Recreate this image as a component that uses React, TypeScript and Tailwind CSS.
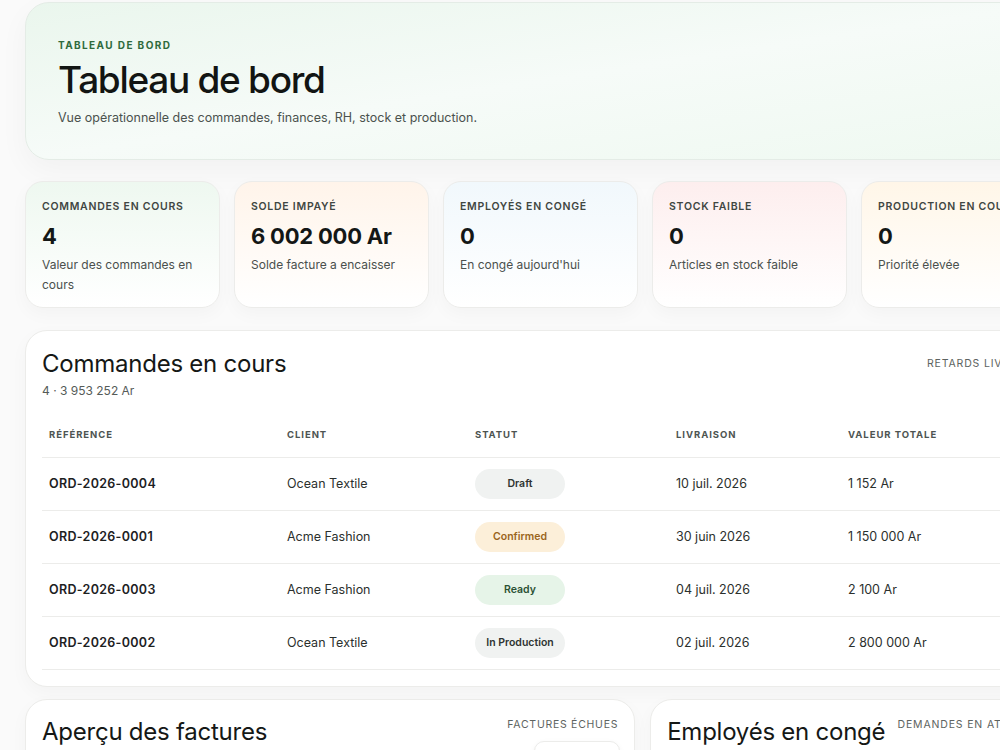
import React from "react";

type Kpi = { label: string; value: string; note: string; tint: string };

const kpis: Kpi[] = [
  { label: "Commandes en cours", value: "4", note: "Valeur des commandes en cours", tint: "from-[#eef8f0]" },
  { label: "Solde impayé", value: "6 002 000 Ar", note: "Solde facture a encaisser", tint: "from-[#fff4ea]" },
  { label: "Employés en congé", value: "0", note: "En congé aujourd'hui", tint: "from-[#f1f8fc]" },
  { label: "Stock faible", value: "0", note: "Articles en stock faible", tint: "from-[#fdeeee]" },
  { label: "Production en cours", value: "0", note: "Priorité élevée", tint: "from-[#fff6e8]" },
];

type Order = { ref: string; client: string; status: string; date: string; total: string };

const orders: Order[] = [
  { ref: "ORD-2026-0004", client: "Ocean Textile", status: "Draft", date: "10 juil. 2026", total: "1 152 Ar" },
  { ref: "ORD-2026-0001", client: "Acme Fashion", status: "Confirmed", date: "30 juin 2026", total: "1 150 000 Ar" },
  { ref: "ORD-2026-0003", client: "Acme Fashion", status: "Ready", date: "04 juil. 2026", total: "2 100 Ar" },
  { ref: "ORD-2026-0002", client: "Ocean Textile", status: "In Production", date: "02 juil. 2026", total: "2 800 000 Ar" },
];

// couleurs des pastilles selon le statut
const pill: Record<string, string> = {
  Draft: "bg-[#f0f2f1] text-[#2e3431]",
  Confirmed: "bg-[#fcefd9] text-[#9a6420]",
  Ready: "bg-[#e6f4e8] text-[#2c5234]",
  "In Production": "bg-[#f0f2f1] text-[#2e3431]",
};

const cols = "grid grid-cols-[238px_188px_201px_172px_1fr] items-center";

function KpiCard({ k }: { k: Kpi }) {
  return (
    <div
      className={`h-[127px] w-[195px] shrink-0 rounded-[18px] border border-[#ececea] bg-gradient-to-b ${k.tint} to-white px-4 pt-[18px] shadow-[0_6px_18px_rgba(0,0,0,0.03)]`}
    >
      <div className="text-[10.5px] font-semibold uppercase leading-[14px] tracking-[0.07em] text-[#3f4642]">
        {k.label}
      </div>
      <div className="mt-[9px] text-[22px] font-bold leading-[26px] tracking-[-0.01em] text-[#141716]">
        {k.value}
      </div>
      <div className="mt-[6px] text-[12px] leading-[20px] text-[#4a504d]">{k.note}</div>
    </div>
  );
}

export default function App() {
  return (
    <div className="h-[750px] w-full overflow-hidden bg-[#fafafa] font-['Inter','Liberation_Sans',sans-serif] text-[#141716]">
      <div className="ml-[25px] flex w-[1032px] flex-col pt-[2px]">
        {/* en-tête */}
        <div className="h-[158px] rounded-[24px] border border-[#e4ece6] bg-gradient-to-br from-[#eaf6ed] via-[#f6fbf8] to-[#eff9f1] px-8 pt-[35px] shadow-[0_10px_30px_rgba(0,0,0,0.04)]">
          <div className="text-[10px] font-bold uppercase leading-[14px] tracking-[0.14em] text-[#2f6a3c]">
            Tableau de bord
          </div>
          <h1 className="mt-[6px] text-[37px] font-medium leading-[44px] tracking-[-0.035em] text-[#121513]">
            Tableau de bord
          </h1>
          <p className="mt-[6px] text-[12.5px] leading-[20px] text-[#4b524e]">
            Vue opérationnelle des commandes, finances, RH, stock et production.
          </p>
        </div>

        {/* indicateurs */}
        <div className="mt-[21px] flex gap-[14px]">
          {kpis.map((k) => (
            <KpiCard key={k.label} k={k} />
          ))}
        </div>

        {/* commandes en cours */}
        <div className="mt-[22px] rounded-[22px] border border-[#ececea] bg-white px-4 pb-4 pt-[17px] shadow-[0_6px_18px_rgba(0,0,0,0.03)]">
          <div className="flex items-start justify-between">
            <div>
              <h2 className="text-[24px] font-normal leading-[32px] tracking-[-0.01em] text-[#151816]">
                Commandes en cours
              </h2>
              <div className="mt-[2px] text-[12px] leading-[18px] text-[#555b58]">4 · 3 953 252 Ar</div>
            </div>
            <div className="mr-[-7px] mt-[8px] text-[10.5px] uppercase tracking-[0.08em] text-[#5d6360]">
              Retards livraison
            </div>
          </div>

          <div className="mt-[20px]">
            <div className={`${cols} h-[38px] border-b border-[#ececea] pb-[6px] text-[9.5px] font-bold uppercase tracking-[0.1em] text-[#4d5451]`}>
              <div className="pl-[7px]">Référence</div>
              <div className="pl-[7px]">Client</div>
              <div className="pl-[7px]">Statut</div>
              <div className="pl-[7px]">Livraison</div>
              <div className="pl-[7px]">Valeur totale</div>
            </div>
            {orders.map((o) => (
              <div key={o.ref} className={`${cols} h-[53px] border-b border-[#ececea] text-[12.5px] text-[#2b302d]`}>
                <div className="pl-[7px] font-semibold tracking-[0.025em] text-[#1d211f]">{o.ref}</div>
                <div className="pl-[7px]">{o.client}</div>
                <div className="pl-[7px]">
                  <span
                    className={`flex h-[30px] w-[90px] items-center justify-center rounded-full text-[10.5px] font-semibold ${pill[o.status]}`}
                  >
                    {o.status}
                  </span>
                </div>
                <div className="pl-[7px]">{o.date}</div>
                <div className="pl-[7px]">{o.total}</div>
              </div>
            ))}
          </div>
        </div>

        {/* bas de page */}
        <div className="mt-[12px] grid grid-cols-[3fr_2fr] gap-[15px]">
          <div className="h-[200px] rounded-[22px] border border-[#ececea] bg-white px-4 pt-[16px] shadow-[0_6px_18px_rgba(0,0,0,0.03)]">
            <div className="flex items-start justify-between">
              <h2 className="text-[24px] leading-[32px] tracking-[-0.01em] text-[#151816]">Aperçu des factures</h2>
              <div className="flex flex-col items-end">
                <div className="mt-[1px] text-[10.5px] uppercase tracking-[0.07em] text-[#5d6360]">
                  Factures échues
                </div>
                <div className="mr-[-2px] mt-[8px] h-[30px] w-[86px] rounded-[10px] border border-[#ececea] bg-white pl-[12px] pt-[6px] text-[12px] text-[#2b302d] shadow-[0_2px_6px_rgba(0,0,0,0.05)]">
                  Commandes
                </div>
              </div>
            </div>
          </div>
          <div className="h-[200px] rounded-[22px] border border-[#ececea] bg-white px-4 pt-[16px] shadow-[0_6px_18px_rgba(0,0,0,0.03)]">
            <div className="flex items-start justify-between">
              <h2 className="text-[24px] leading-[32px] tracking-[-0.01em] text-[#151816]">Employés en congé</h2>
              <div className="mt-[1px] text-[10.5px] uppercase tracking-[0.08em] text-[#5d6360]">
                Demandes en attente
              </div>
            </div>
          </div>
        </div>
      </div>
    </div>
  );
}
